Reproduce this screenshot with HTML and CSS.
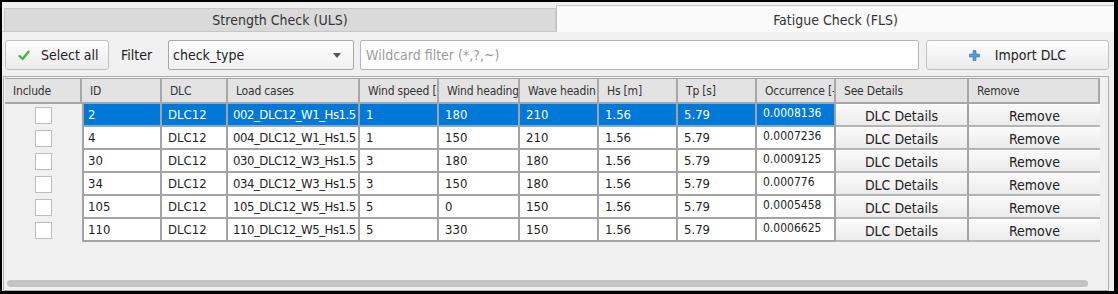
FILE: index.html
```html
<!DOCTYPE html>
<html lang="en">
<head>
  <meta charset="UTF-8" />
  <title>Load Cases - Fatigue Check</title>
  <link rel="stylesheet" href="styles.css">
</head>
<body>

<div class="window">
  <div class="tabs">
    <div class="tab">Strength Check (ULS)</div>
    <div class="tab active">Fatigue Check (FLS)</div>
  </div>

  <div class="pane">
    <div class="toolbar">
      <button class="btn select-all">
        <svg width="12" height="11" viewBox="0 0 12 11"><path d="M1.5 6 L4.6 9 L10.5 1.8" fill="none" stroke="#3fb83f" stroke-width="2.4" stroke-linecap="round" stroke-linejoin="round"/></svg>
        Select all
      </button>
      <span class="filter-label">Filter</span>
      <div class="combo">
        <span>check_type</span>
        <span class="arrow"></span>
      </div>
      <input class="wildcard" type="text" placeholder="Wildcard filter (*,?,~)">
      <button class="btn import">
        <svg width="11" height="11" viewBox="0 0 11 11"><path d="M4 0.5h3v3.5h3.5v3h-3.5v3.5h-3v-3.5h-3.5v-3h3.5z" fill="#5a97d8" stroke="#3d78bb" stroke-width="0.6"/></svg>
        Import DLC
      </button>
    </div>

    <div class="table-frame">
      <div class="grid">
        <div class="row head">
          <div class="cell">Include</div>
          <div class="cell">ID</div>
          <div class="cell">DLC</div>
          <div class="cell">Load cases</div>
          <div class="cell">Wind speed [</div>
          <div class="cell">Wind heading</div>
          <div class="cell">Wave headin</div>
          <div class="cell">Hs [m]</div>
          <div class="cell">Tp [s]</div>
          <div class="cell">Occurrence [-</div>
          <div class="cell">See Details</div>
          <div class="cell">Remove</div>
        </div>

        <div class="row sel">
          <div class="cell inc"><span class="check"></span></div>
          <div class="cell id">2</div>
          <div class="cell">DLC12</div>
          <div class="cell lc">002_DLC12_W1_Hs1.5</div>
          <div class="cell">1</div>
          <div class="cell">180</div>
          <div class="cell">210</div>
          <div class="cell">1.56</div>
          <div class="cell">5.79</div>
          <div class="cell occ">0.0008136</div>
          <div class="cell act"><span class="b">DLC Details</span></div>
          <div class="cell act last"><span class="b">Remove</span></div>
        </div>
        <div class="row">
          <div class="cell inc"><span class="check"></span></div>
          <div class="cell id">4</div>
          <div class="cell">DLC12</div>
          <div class="cell lc">004_DLC12_W1_Hs1.5</div>
          <div class="cell">1</div>
          <div class="cell">150</div>
          <div class="cell">210</div>
          <div class="cell">1.56</div>
          <div class="cell">5.79</div>
          <div class="cell occ">0.0007236</div>
          <div class="cell act"><span class="b">DLC Details</span></div>
          <div class="cell act last"><span class="b">Remove</span></div>
        </div>
        <div class="row">
          <div class="cell inc"><span class="check"></span></div>
          <div class="cell id">30</div>
          <div class="cell">DLC12</div>
          <div class="cell lc">030_DLC12_W3_Hs1.5</div>
          <div class="cell">3</div>
          <div class="cell">180</div>
          <div class="cell">180</div>
          <div class="cell">1.56</div>
          <div class="cell">5.79</div>
          <div class="cell occ">0.0009125</div>
          <div class="cell act"><span class="b">DLC Details</span></div>
          <div class="cell act last"><span class="b">Remove</span></div>
        </div>
        <div class="row">
          <div class="cell inc"><span class="check"></span></div>
          <div class="cell id">34</div>
          <div class="cell">DLC12</div>
          <div class="cell lc">034_DLC12_W3_Hs1.5</div>
          <div class="cell">3</div>
          <div class="cell">150</div>
          <div class="cell">180</div>
          <div class="cell">1.56</div>
          <div class="cell">5.79</div>
          <div class="cell occ">0.000776</div>
          <div class="cell act"><span class="b">DLC Details</span></div>
          <div class="cell act last"><span class="b">Remove</span></div>
        </div>
        <div class="row">
          <div class="cell inc"><span class="check"></span></div>
          <div class="cell id">105</div>
          <div class="cell">DLC12</div>
          <div class="cell lc">105_DLC12_W5_Hs1.5</div>
          <div class="cell">5</div>
          <div class="cell">0</div>
          <div class="cell">150</div>
          <div class="cell">1.56</div>
          <div class="cell">5.79</div>
          <div class="cell occ">0.0005458</div>
          <div class="cell act"><span class="b">DLC Details</span></div>
          <div class="cell act last"><span class="b">Remove</span></div>
        </div>
        <div class="row">
          <div class="cell inc"><span class="check"></span></div>
          <div class="cell id">110</div>
          <div class="cell">DLC12</div>
          <div class="cell lc">110_DLC12_W5_Hs1.5</div>
          <div class="cell">5</div>
          <div class="cell">330</div>
          <div class="cell">150</div>
          <div class="cell">1.56</div>
          <div class="cell">5.79</div>
          <div class="cell occ">0.0006625</div>
          <div class="cell act"><span class="b">DLC Details</span></div>
          <div class="cell act last"><span class="b">Remove</span></div>
        </div>
      </div>

      <div class="hscroll"><div class="handle"></div></div>
    </div>
  </div>
</div>

</body>
</html>
```

FILE: styles.css
```css
* {
  box-sizing: border-box;
}

body {
  margin: 0;
  background-color: #000;
  font-family: "DejaVu Sans Condensed", "Liberation Sans", sans-serif;
  font-size: 13px;
  color: #1e1e1e;
}

.window {
  width: 1118px;
  height: 294px;
  border: solid #000;
  border-width: 2px 4px 3px 2px;
  background-color: #f0f0f0;
  display: flex;
  flex-direction: column;
}

/* tabs */
.tabs {
  display: flex;
  align-items: flex-end;
  height: 30px;
  padding-left: 2px;
  border-bottom: 1px solid #c6c6c6;
}

.tab {
  width: 552px;
  height: 23px;
  background-color: #dadada;
  border: 1px solid #c6c6c6;
  border-bottom: none;
  display: flex;
  align-items: center;
  justify-content: center;
  font-size: 14px;
  color: #333;
}

.tab.active {
  flex: 1;
  height: 27px;
  margin-bottom: -1px;
  padding-top: 2px;
  background-color: #fafafa;
  border-right: none;
}

/* pane */
.pane {
  flex: 1;
  display: flex;
  flex-direction: column;
  padding: 0 5px 0 1px;
}

.toolbar {
  display: flex;
  align-items: center;
  height: 30px;
  margin-top: 8px;
  padding-left: 2px;
}

.btn {
  height: 30px;
  border: 1px solid #c2c2c2;
  border-radius: 3px;
  background: linear-gradient(#fdfdfd, #ebebeb);
  font-family: inherit;
  font-size: 14px;
  color: #222;
  display: flex;
  align-items: center;
  padding: 0;
}

.select-all {
  width: 104px;
  padding-left: 12px;
  gap: 11px;
}

.filter-label {
  margin-left: 12px;
  width: 47px;
  font-size: 14px;
  color: #222;
}

.combo {
  width: 186px;
  height: 30px;
  border: 1px solid #a9a9a9;
  border-radius: 2px;
  background: linear-gradient(#fcfcfc, #f1f1f1);
  padding: 0 4px;
  display: flex;
  align-items: center;
  justify-content: space-between;
  font-size: 14px;
  color: #222;
}

.arrow {
  width: 0;
  height: 0;
  border-left: 4px solid transparent;
  border-right: 4px solid transparent;
  border-top: 5px solid #555;
  margin-right: 8px;
}

.wildcard {
  flex: 1;
  height: 30px;
  margin-left: 6px;
  border: 1px solid #b5b5b5;
  border-radius: 2px;
  padding: 0 5px;
  background-color: #fff;
  font-family: inherit;
  font-size: 14px;
  outline: none;
}

.wildcard::placeholder {
  color: #9b9b9b;
}

.import {
  width: 183px;
  margin-left: 7px;
  justify-content: center;
  gap: 15px;
}

/* table */
.table-frame {
  flex: 1;
  margin-top: 6px;
  border: 1px solid #b0b0b0;
  padding: 1px;
  display: flex;
  flex-direction: column;
}

.row {
  display: grid;
  grid-template-columns: 77px 80px 66px 132px 79px 81px 79px 79px 79px 79px 133px 131px;
  height: 23px;
}

.cell {
  display: flex;
  align-items: center;
  padding: 0 6px;
  overflow: hidden;
  white-space: nowrap;
  background-color: #fff;
  border-right: 2px solid #a3a3a3;
  border-bottom: 2px solid #a3a3a3;
}

.row.head {
  height: 26px;
}

.head .cell {
  background-color: #e3e3e3;
  border-top: 1px solid #f7f7f7;
  border-color: #a8a8a8;
  font-size: 12px;
  letter-spacing: -0.2px;
  color: #333;
  padding-left: 8px;
}

.cell.inc {
  background-color: #f0f0f0;
  border: none;
  justify-content: center;
}

.check {
  width: 17px;
  height: 17px;
  background-color: #fff;
  border: 1px solid #bdbdbd;
}

.cell.id {
  border-left: 2px solid #a3a3a3;
  padding-left: 4px;
}

.cell.lc {
  padding-left: 5px;
  letter-spacing: -0.45px;
}

.cell.occ {
  align-items: flex-start;
  padding-top: 2px;
  font-size: 12px;
}

.sel .cell:not(.inc):not(.act) {
  background-color: #0078d7;
  color: #fff;
}

.cell.act {
  padding: 0;
  background-color: #f0f0f0;
  border-bottom-color: #b4b4b4;
}

.cell.act.last {
  border-right: none;
}

.act .b {
  flex: 1;
  align-self: stretch;
  display: flex;
  align-items: center;
  justify-content: center;
  padding-top: 2px;
  background: linear-gradient(#fafafa, #ebebeb);
  border-top: 1px solid #fff;
  font-size: 14px;
  color: #222;
}

.hscroll {
  margin-top: auto;
  height: 12px;
  padding: 3px 19px 2px 2px;
}

.handle {
  height: 7px;
  background-color: #c3c3c3;
  border-radius: 4px;
}
```
